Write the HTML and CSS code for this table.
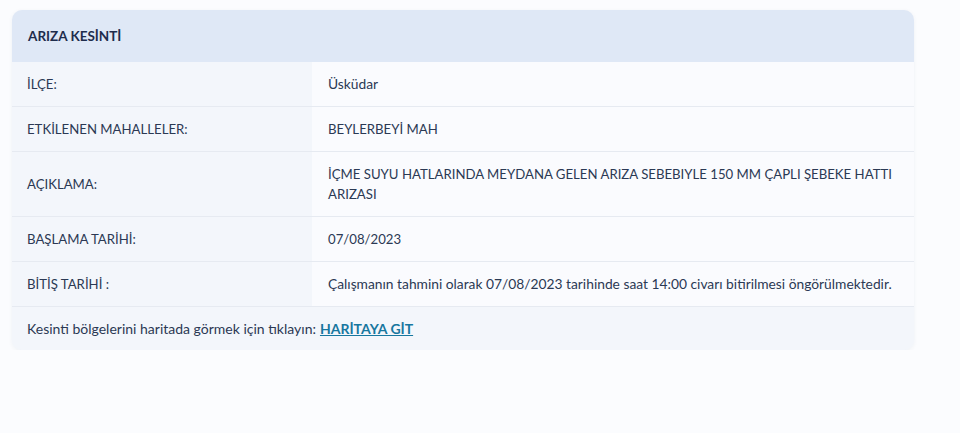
FILE: index.html
```html
<!DOCTYPE html>
<html lang="tr">
<head>
    <meta charset="UTF-8">
    <meta name="viewport" content="width=device-width, initial-scale=1.0">
    <title>Arıza Kesinti</title>
    <link rel="stylesheet" href="styles.css">
</head>
<body>

    <div class="card">
        <div class="card-header">ARIZA KESİNTİ</div>

        <div class="row">
            <div class="label">İLÇE:</div>
            <div class="value text">Üsküdar</div>
        </div>
        <div class="row">
            <div class="label">ETKİLENEN MAHALLELER:</div>
            <div class="value">BEYLERBEYİ MAH</div>
        </div>
        <div class="row">
            <div class="label">AÇIKLAMA:</div>
            <div class="value">İÇME SUYU HATLARINDA MEYDANA GELEN ARIZA SEBEBIYLE 150 MM ÇAPLI ŞEBEKE HATTI ARIZASI</div>
        </div>
        <div class="row">
            <div class="label">BAŞLAMA TARİHİ:</div>
            <div class="value">07/08/2023</div>
        </div>
        <div class="row">
            <div class="label">BİTİŞ TARİHİ :</div>
            <div class="value text">Çalışmanın tahmini olarak 07/08/2023 tarihinde saat 14:00 civarı bitirilmesi öngörülmektedir.</div>
        </div>

        <div class="card-footer">
            Kesinti bölgelerini haritada görmek için tıklayın: <a href="#" class="map-link">HARİTAYA GİT</a>
        </div>
    </div>

</body>
</html>
```

FILE: styles.css
```css
* {
    margin: 0;
    padding: 0;
    box-sizing: border-box;
}
body {
    font-family: 'Lato', 'Noto Sans', sans-serif;
    background: #fbfcfe;
    color: #2b3954;
    padding: 10px 46px 0 12px;
}
.card {
    border-radius: 10px;
    overflow: hidden;
    background: #f3f6fb;
    box-shadow: 0 1px 4px rgba(40, 60, 110, 0.06);
}
.card-header {
    background: #dfe8f6;
    height: 52px;
    padding: 0 16px;
    display: flex;
    align-items: center;
    font-size: 13.5px;
    font-weight: bold;
    color: #1e2c4c;
}
.row {
    display: flex;
    border-bottom: 1px solid #e6eaf1;
    font-size: 13.2px;
}
.label {
    width: 300px;
    flex-shrink: 0;
    padding: 0 15px;
    display: flex;
    align-items: center;
    background: #f3f6fb;
}
.value {
    flex: 1;
    min-height: 44px;
    padding: 12px 10px 12px 16px;
    display: flex;
    align-items: center;
    background: #fafbfe;
    line-height: 20px;
}
.value.text {
    font-size: 13.8px;
}
.card-footer {
    height: 43px;
    padding: 0 15px;
    display: flex;
    align-items: center;
    font-size: 14px;
    gap: 4px;
}
.map-link {
    color: #17779f;
    font-weight: bold;
}
```
